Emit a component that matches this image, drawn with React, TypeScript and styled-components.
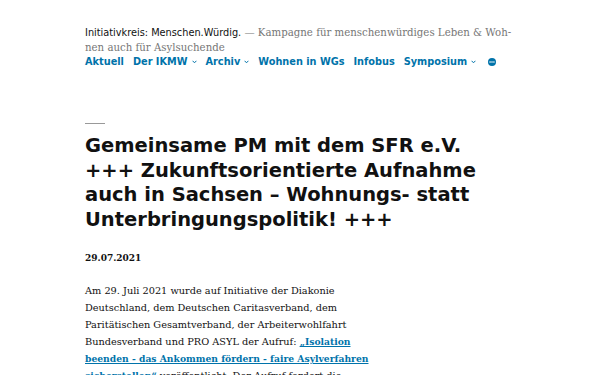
import * as React from 'react';
import styled, { createGlobalStyle } from 'styled-components';

const GlobalStyle = createGlobalStyle`
  html, body {
    margin: 0;
    padding: 0;
    background: #fff;
  }
  body {
    font-family: "DejaVu Serif", serif;
    font-size: 9.75px;
    color: #111;
  }
`;

const Page = styled.div`
  width: 600px;
  height: 375px;
  overflow: hidden;
  padding: 25px 0 0 85px;
  box-sizing: border-box;
`;

const Header = styled.header`
  width: 435px;
`;

const Branding = styled.div`
  font-family: "DejaVu Serif", serif;
  font-size: 10.2px;
  line-height: 15px;
`;

const SiteTitle = styled.span`
  font-family: "DejaVu Sans", sans-serif;
  font-size: 9.75px;
  color: #111;
`;

const Description = styled.span`
  color: #767676;
`;

const Nav = styled.nav`
  display: flex;
  align-items: center;
  gap: 9px;
  white-space: nowrap;
  font-family: "DejaVu Sans", sans-serif;
  font-weight: bold;
  font-size: 9.75px;
  line-height: 13px;
  color: #0073aa;
`;

const NavItem = styled.span`
  display: flex;
  align-items: center;
  gap: 4px;
`;

const MoreIcon = styled.span`
  margin-left: 3px;
  display: flex;
`;

const Chevron = () => (
  <svg width="5" height="4" viewBox="0 0 5 4">
    <path d="M0.6 0.8 L2.5 2.8 L4.4 0.8" fill="none" stroke="#0073aa" strokeWidth="1" />
  </svg>
);

const Article = styled.article`
  margin-top: 55px;
`;

const Rule = styled.div`
  width: 20px;
  height: 1px;
  background: #999;
`;

const Title = styled.h1`
  margin: 10px 0 0;
  width: 420px;
  font-family: "DejaVu Sans", sans-serif;
  font-weight: bold;
  font-size: 19.5px;
  line-height: 24.5px;
  color: #111;
`;

const PostDate = styled.div`
  margin-top: 19px;
  font-weight: bold;
  font-size: 9px;
  line-height: 14px;
  color: #111;
`;

const Body = styled.p`
  margin: 17px 0 0;
  width: 292px;
  font-size: 9.75px;
  line-height: 17px;
  color: #111;
`;

const Link = styled.a`
  color: #0073aa;
  font-weight: bold;
  font-size: 9.2px;
  text-decoration: underline;
`;

const navItems: { label: string; sub?: boolean }[] = [
  { label: 'Aktuell' },
  { label: 'Der IKMW', sub: true },
  { label: 'Archiv', sub: true },
  { label: 'Wohnen in WGs' },
  { label: 'Infobus' },
  { label: 'Symposium', sub: true },
];

export default function App() {
  return (
    <Page>
      <GlobalStyle />
      <Header>
        <Branding>
          <SiteTitle>Initiativkreis: Menschen.Würdig.</SiteTitle>{' '}
          <Description>— Kampagne für menschenwürdiges Leben &amp; Woh{'\u00AD'}nen auch für Asylsuchende</Description>
        </Branding>
        <Nav>
          {navItems.map(item => (
            <NavItem key={item.label}>
              {item.label}
              {item.sub ? <Chevron /> : null}
            </NavItem>
          ))}
          <MoreIcon>
            <svg width="8" height="8" viewBox="0 0 10 10">
              <circle cx="5" cy="5" r="5" fill="#0073aa" />
              <circle cx="2.6" cy="5" r="1" fill="#fff" />
              <circle cx="5" cy="5" r="1" fill="#fff" />
              <circle cx="7.4" cy="5" r="1" fill="#fff" />
            </svg>
          </MoreIcon>
        </Nav>
      </Header>
      <Article>
        <Rule />
        <Title>
          Gemeinsame PM mit dem SFR e.V. +++ Zukunftsorientierte Aufnahme auch in Sachsen – Wohnungs- statt Unterbringungspolitik! +++
        </Title>
        <PostDate>29.07.2021</PostDate>
        <Body>
          Am 29. Juli 2021 wurde auf Initiative der Diakonie Deutschland, dem Deutschen Caritasverband, dem
          Paritätischen Gesamtverband, der Arbeiterwohlfahrt Bundesverband und PRO ASYL der Aufruf:{' '}
          <Link>„Isolation beenden - das Ankommen fördern - faire Asylverfahren sicherstellen“</Link> veröffentlicht. Der
          Aufruf fordert die
        </Body>
      </Article>
    </Page>
  );
}
